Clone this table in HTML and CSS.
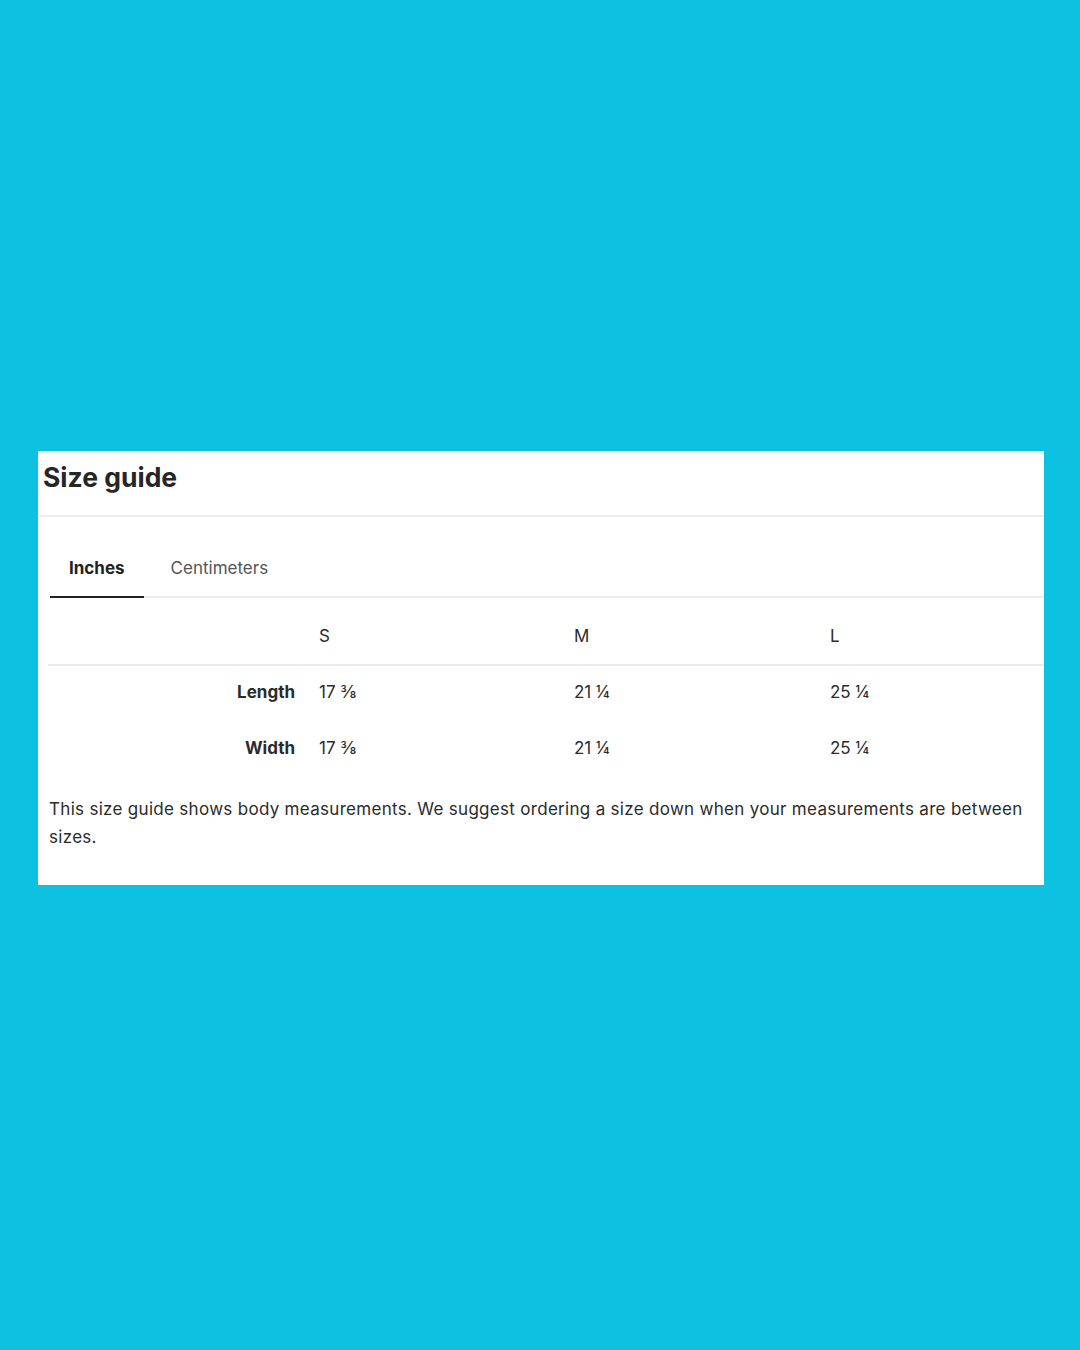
FILE: index.html
```html
<!DOCTYPE html>
<html lang="en">
<head>
<meta charset="utf-8">
<title>Size guide</title>
<link rel="stylesheet" href="styles.css">
</head>
<body>
<main class="page">
  <section class="card">
    <h1 class="title">Size guide</h1>
    <div class="body">
      <nav class="tabs">
        <span class="tab tab-active">Inches</span>
        <span class="tab">Centimeters</span>
      </nav>
      <table class="sizes">
        <colgroup>
          <col class="col-label">
          <col class="col-s">
          <col class="col-m">
          <col class="col-l">
        </colgroup>
        <thead>
          <tr><th class="label"></th><th>S</th><th>M</th><th>L</th></tr>
        </thead>
        <tbody>
          <tr><th class="label">Length</th><td>17 ⅜</td><td>21 ¼</td><td>25 ¼</td></tr>
          <tr><th class="label">Width</th><td>17 ⅜</td><td>21 ¼</td><td>25 ¼</td></tr>
        </tbody>
      </table>
      <p class="note">This size guide shows body measurements. We suggest ordering a size down when your measurements are between sizes.</p>
    </div>
  </section>
</main>
</body>
</html>
```
FILE: styles.css
```css
html, body {
  margin: 0;
  padding: 0;
}
body {
  background: #0dc1e0;
  font-family: "Inter", "Roboto", sans-serif;
  color: #2b2b2b;
}
.page {
  width: 1080px;
  height: 1350px;
  display: flex;
  align-items: flex-start;
  padding: 451px 36px 0 38px;
  box-sizing: border-box;
}
.card {
  background: #fff;
  width: 1006px;
  height: 434px;
}
.title {
  margin: 0;
  padding: 9px 5px 0;
  height: 55px;
  font-size: 26.5px;
  font-weight: 700;
  line-height: 34px;
  color: #262626;
  border-bottom: 2px solid #ececec;
}
.body {
  padding: 0 0 0 10px;
}
.tabs {
  display: flex;
  margin-left: 2px;
  margin-top: 28px;
  border-bottom: 2px solid #ececec;
}
.tab {
  padding: 12px 19px 17px;
  font-size: 17px;
  line-height: 22px;
  color: #555;
  margin-bottom: -2px;
  border-bottom: 2px solid transparent;
  margin-right: 8px;
}
.tab-active {
  font-weight: 700;
  color: #222;
  border-bottom-color: #222;
}
.sizes {
  border-collapse: collapse;
  table-layout: fixed;
  width: 996px;
  margin-top: 12px;
  font-size: 17px;
}
.col-label { width: 271px; }
.col-s { width: 255px; }
.col-m { width: 256px; }
.col-l { width: 214px; }
.sizes th, .sizes td {
  text-align: left;
  font-weight: 400;
  padding: 0;
}
.sizes thead th {
  height: 52px;
  border-bottom: 2px solid #ececec;
  vertical-align: middle;
  padding-bottom: 2px;
}
.sizes .label {
  text-align: right;
  padding-right: 24px;
  font-weight: 700;
}
.sizes tbody th, .sizes tbody td {
  height: 52px;
  padding-bottom: 4px;
}
.note {
  margin: 17px 16px 0 1px;
  font-size: 17px;
  line-height: 28px;
  letter-spacing: 0.3px;
  color: #2b2b2b;
}
```
